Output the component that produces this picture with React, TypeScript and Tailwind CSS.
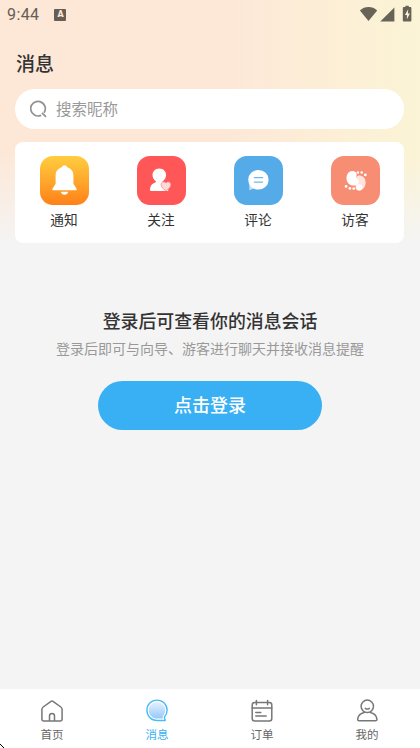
import React from 'react';

interface IconProps {
  className?: string;
}

const BellIcon: React.FC<IconProps> = ({ className }) => (
  <svg viewBox="0 0 49 49" className={className} fill="white">
    <path d="M24.5 9.2c1.3 0 2.300.8 2.700 2 3.700 1.100 6.200 4.100 6.200 8.200v8.300l3 4.800c.6 1 .1 1.800-.8 1.800H13.400c-.9 0-1.400-.8-.8-1.800l3-4.800v-8.300c0-4.100 2.500-7.100 6.200-8.200.4-1.200 1.400-2 2.700-2z" />
    <path d="M20.800 35.800h7.400c-.4 1.900-1.900 3-3.700 3s-3.300-1.100-3.700-3z" />
  </svg>
);

const FollowIcon: React.FC<IconProps> = ({ className }) => (
  <svg viewBox="0 0 49 49" className={className}>
    <path
      d="M22.300 12.400c4 0 6.800 2.900 6.800 6.700 0 2.400-1.300 4.700-3.400 6.100v1.100c3 .5 4.800 1.800 5.500 3.500V35H14.300c-1.200 0-1.600-.7-1.400-1.700.6-3.900 2.600-6.200 6-7v-1.100c-2.100-1.400-3.400-3.700-3.400-6.100 0-3.800 2.800-6.700 6.800-6.700z"
      fill="white"
    />
    <path
      d="M29 34.800c-3.400-2.200-4.900-4.100-4.900-6.100 0-3.100 3.500-3.800 4.900-1.700 1.400-2.100 4.900-1.400 4.900 1.700 0 2-1.500 3.900-4.900 6.100z"
      fill="#ffd9d9"
      stroke="#ff6a6a"
      strokeWidth="0.600"
    />
  </svg>
);

const CommentIcon: React.FC<IconProps> = ({ className }) => (
  <svg viewBox="0 0 49 49" className={className}>
    <path d="M15.300 24v10.300l5-2z" fill="#c5e2f7" />
    <ellipse cx="24.400" cy="23.800" rx="10.200" ry="9.800" fill="white" />
    <path d="M20.300 21.600h8.300M20.300 26.100h8.300" stroke="#6fb8ec" strokeWidth="1.200" strokeLinecap="round" />
  </svg>
);

const VisitorIcon: React.FC<IconProps> = ({ className }) => (
  <svg viewBox="0 0 49 49" className={className} fill="white">
    <path
      d="M27.500 19.600c4.500 0 7.100 2.700 7.100 6.900 0 4.400-2.700 7.900-6.400 7.900-2.300 0-3.700-1.200-3.700-3 0-1.500.7-2.400.5-3.900l-1.500-6z"
      fill="#ffe3dc"
    />
    <path d="M21.300 15c2.700 0 4.400 1.500 4.400 3.400 0 1.200-.7 1.700-.7 2.700 0 1.900 2.700 1.800 2.700 4.300 0 2.600-2.200 4.200-5.100 4.200-4.300 0-7.100-3.200-7.100-7.300 0-4.200 2.300-7.300 5.800-7.300z" />
    <circle cx="28.300" cy="31.300" r="3.100" />
    <circle cx="26.900" cy="16.500" r="1.200" />
    <circle cx="30.700" cy="16.500" r="1.300" />
    <circle cx="34.300" cy="18.900" r="1.400" />
    <circle cx="15.100" cy="30.400" r="1.400" />
    <circle cx="18.900" cy="32.400" r="1.400" />
    <circle cx="22.700" cy="32.600" r="1.300" />
  </svg>
);

const SearchIcon: React.FC<IconProps> = ({ className }) => (
  <svg viewBox="0 0 18 18" className={className} fill="none" stroke="#929292" strokeWidth="1.700">
    <path d="M11.200 15.200A7.300 7.300 0 1 1 14 12.800M12 12.800l4 4" />
  </svg>
);

const HomeIcon: React.FC<IconProps> = ({ className }) => (
  <svg viewBox="0 0 24 24" className={className} fill="none" stroke="#777777" strokeWidth="1.500" strokeLinejoin="round">
    <path d="M3.200 8 11 2.300q1-.7 2 0L20.800 8q1.300 1 1.300 2.500v9.400q0 2-2 2H3.900q-2 0-2-2v-9.400q0-1.500 1.300-2.500z" />
    <path d="M9.500 22v-5a2.500 2.500 0 0 1 5 0v5" />
  </svg>
);

const MessageIcon: React.FC<IconProps> = ({ className }) => (
  <svg viewBox="0 0 24 24" className={className}>
    <defs>
      <linearGradient id="bubble" x1="0" y1="0" x2="0" y2="1">
        <stop offset="0" stopColor="#e6f2fe" />
        <stop offset="1" stopColor="#96c9fa" />
      </linearGradient>
    </defs>
    <path
      d="M12 1.100c5.700 0 10.100 4.400 10.100 10 0 2.900-.9 5.100-2.700 7l.8 3.400H12C6.300 21.500 1.900 17 1.900 11.300S6.300 1.100 12 1.100z"
      fill="white"
      stroke="#4bbaf7"
      strokeWidth="1.400"
      strokeLinejoin="round"
    />
    <path d="M12 2.900c4.600 0 8.200 3.700 8.200 8.300 0 2.600-1 4.600-2.600 6.200l.4 2.100h-6c-4.600 0-8.200-3.700-8.200-8.300S7.400 2.900 12 2.900z" fill="url(#bubble)" />
  </svg>
);

const OrderIcon: React.FC<IconProps> = ({ className }) => (
  <svg viewBox="0 0 24 24" className={className} fill="none" stroke="#777777" strokeWidth="1.500" strokeLinecap="round">
    <rect x="2.200" y="3.600" width="19.600" height="18.300" rx="2.500" />
    <path d="M2.200 9h19.600M6.400 1.400v4.400M17.600 1.400v4.400M5.800 13.500h5M5.800 17.100h10.400" />
  </svg>
);

const ProfileIcon: React.FC<IconProps> = ({ className }) => (
  <svg viewBox="0 0 24 24" className={className} fill="none" stroke="#777777" strokeWidth="1.500" strokeLinecap="round">
    <circle cx="12.300" cy="7.300" r="6.200" />
    <path d="M10.300 9.400q2 1.400 4 0M9.300 13.500c-3.600.7-6 2.900-6.600 6.300-.2 1.300.3 1.900 1.400 1.900h16.400c1.100 0 1.600-.6 1.400-1.900-.6-3.400-3-5.600-6.600-6.300" />
  </svg>
);

const StatusBar: React.FC = () => (
  <div className="flex h-[29px] items-center justify-between px-[7px]">
    <div className="flex items-center">
      <span className="font-['Roboto'] text-[16px] leading-[29px] tracking-[0.4px] text-[#675d54]">9:44</span>
      <span className="ml-[15px] flex h-3 w-3 items-center justify-center rounded-[1px] bg-[#675d54] font-['Roboto'] text-[9px] leading-none font-black text-[#fde9d9]">
        A
      </span>
    </div>
    <svg viewBox="0 0 54 18" className="mb-[2px] h-[18px] w-[54px]" fill="#676457">
      <path d="M.9 5.400C5.600.9 13.500.9 18.200 5.400L9.500 16z" />
      <path d="M35.400 2.500v14H21.300z" />
      <path d="M46.400 2.100V.8h3.400v1.300h1.600q1 0 1 1v12.400q0 1-1 1h-6.600q-1 0-1-1V3.100q0-1 1-1z" />
      <path d="M49.200 4.300 45.900 10h2v4.300l3-5.800h-2z" fill="#fcf2d7" />
    </svg>
  </div>
);

const shortcuts = [
  { label: '通知', Icon: BellIcon, background: 'bg-linear-to-b from-[#ffcd3e] to-[#ff8017]' },
  { label: '关注', Icon: FollowIcon, background: 'bg-[#ff5757]' },
  { label: '评论', Icon: CommentIcon, background: 'bg-[#54abe8]' },
  { label: '访客', Icon: VisitorIcon, background: 'bg-[#f78d73]' },
];

const tabs = [
  { label: '首页', Icon: HomeIcon, active: false },
  { label: '消息', Icon: MessageIcon, active: true },
  { label: '订单', Icon: OrderIcon, active: false },
  { label: '我的', Icon: ProfileIcon, active: false },
];

export default function App() {
  return (
    <div className="relative flex h-[748px] w-[420px] flex-col overflow-hidden bg-[#f4f4f4] font-['Noto_Sans_CJK_SC',sans-serif] text-[#333333]">
      <div className="absolute inset-x-0 top-0 h-[250px] bg-linear-to-r from-[#fde8d8] from-55% via-[#fcefd6] via-80% to-[#fbf4d6]">
        <div className="h-full bg-linear-to-b from-[#f4f4f4]/0 from-62% to-[#f4f4f4] to-98%" />
      </div>

      <div className="relative flex flex-1 flex-col">
        <StatusBar />

        <header className="flex h-[60px] items-center px-4 pt-2">
          <h1 className="text-[19px] leading-7 font-medium">消息</h1>
        </header>

        <div className="mr-4 ml-[15px] flex h-10 items-center rounded-full bg-white pl-[15px]">
          <SearchIcon className="h-[18px] w-[18px]" />
          <input
            placeholder="搜索昵称"
            className="mb-[3px] ml-2 h-8 w-72 text-[15.500px] outline-none placeholder:text-[#999999]"
          />
        </div>

        <section className="mr-4 ml-[15px] mt-[13px] flex h-[101px] justify-between rounded-lg bg-white px-6 pt-[14px]">
          {shortcuts.map(({ label, Icon, background }) => (
            <button key={label} className="flex w-[50px] flex-col items-center">
              <span className={`block h-[49px] w-[49px] rounded-[13px] ${background}`}>
                <Icon className="h-[49px] w-[49px]" />
              </span>
              <span className="mt-1 text-[13.700px] leading-5">{label}</span>
            </button>
          ))}
        </section>

        <section className="mt-[63px] flex flex-col items-center">
          <h2 className="text-[17.900px] leading-7 font-medium">登录后可查看你的消息会话</h2>
          <p className="mt-[2px] text-[14px] leading-6 text-[#999999]">登录后即可与向导、游客进行聊天并接收消息提醒</p>
          <button className="mt-[21px] h-[49px] w-56 rounded-full bg-[#39b0f4] pb-[2px] text-[18px] font-medium text-white">
            点击登录
          </button>
        </section>
      </div>

      <nav className="relative flex h-[59px] bg-white pt-[10px]">
        {tabs.map(({ label, Icon, active }) => (
          <button key={label} className="flex flex-1 flex-col items-center pr-px">
            <Icon className="h-6 w-6" />
            <span className={`mt-[2px] text-[11.500px] leading-[18px] ${active ? 'text-[#39b0f4]' : 'text-[#666666]'}`}>
              {label}
            </span>
          </button>
        ))}
        {/* pointer tip at the screen edge */}
        <svg viewBox="0 0 4 4" className="absolute bottom-0 left-0 h-1 w-1">
          <path d="M0 0v1h1v1h1v1h1v1h1V3H3V2H2V1H1V0z" fill="black" />
        </svg>
      </nav>
    </div>
  );
}
